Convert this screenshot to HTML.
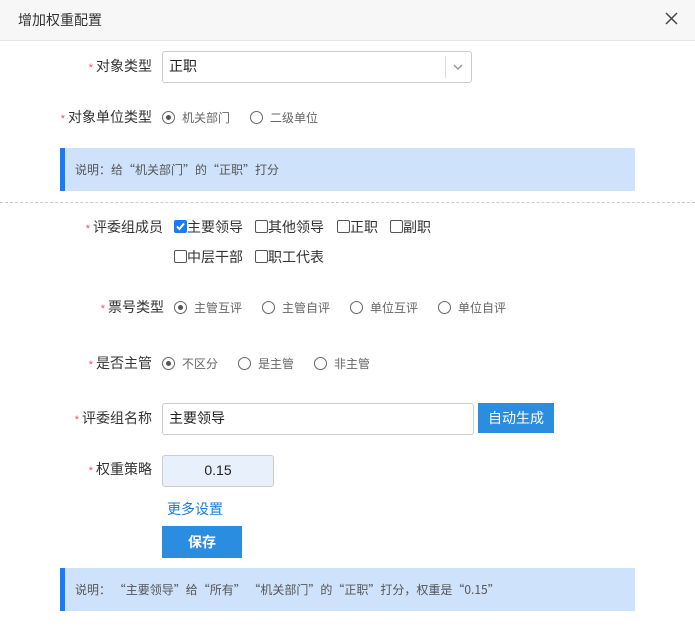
<!DOCTYPE html>
<html><head><meta charset="utf-8"><style>
*{box-sizing:border-box;margin:0;padding:0}
body{width:695px;height:630px;background:#fff;font-family:"Liberation Sans","Noto Sans CJK SC",sans-serif;color:#333;position:relative;overflow:hidden}
.a{position:absolute}
.hd{left:0;top:0;width:695px;height:41px;background:#f7f7f7;border-bottom:1px solid #e8e8e8}
.lbl{font-size:14px;color:#333;text-align:right;width:152px;left:0;line-height:16px}
.lbl b{color:#e55;font-weight:normal;font-size:11px;margin-right:3px}
.r{width:13px;height:13px;border:1.5px solid #666;border-radius:50%}
.r.on::after{content:"";position:absolute;left:2.5px;top:2.5px;width:5px;height:5px;border-radius:50%;background:#555}
.rt{font-size:12px;color:#666;line-height:14px}
.cb{width:13px;height:13px;border:1px solid #555;border-radius:2px}
.ct{font-size:14px;color:#333;line-height:16px}
.info{left:60px;width:575px;height:43px;background:#cfe2fb;border-left:5px solid #1a7cf5;font-size:12px;color:#555;padding-left:10px;line-height:43px;font-family:"Noto Sans CJK SC","Liberation Sans",sans-serif}
.inp{border:1px solid #ccc;border-radius:3px;background:#fff;font-size:14px;color:#222;padding-left:6px;line-height:29px}
</style></head><body>
<div class="a hd"></div>
<div class="a" style="left:18px;top:10px;font-size:14px;color:#333">增加权重配置</div>
<svg class="a" style="left:665px;top:12px" width="13" height="13" viewBox="0 0 13 13"><path d="M1 1L12 12M12 1L1 12" stroke="#444" stroke-width="1.5"/></svg>

<div class="a lbl" style="top:58px"><b>*</b>对象类型</div>
<div class="a inp" style="left:162px;top:51px;width:310px;height:32px">正职</div>
<div class="a" style="left:445px;top:56px;width:1px;height:22px;background:#ddd"></div>
<svg class="a" style="left:453px;top:64px" width="10" height="7" viewBox="0 0 10 7"><path d="M1 1L5 5L9 1" stroke="#999" stroke-width="1.5" fill="none"/></svg>

<div class="a lbl" style="top:109px"><b>*</b>对象单位类型</div>
<div class="a r on" style="left:162px;top:111px"></div><div class="a rt" style="left:182px;top:111px">机关部门</div>
<div class="a r" style="left:250px;top:111px"></div><div class="a rt" style="left:270px;top:111px">二级单位</div>

<div class="a info" style="top:148px">说明：给“机关部门”的“正职”打分</div>
<div class="a" style="left:0;top:202px;width:695px;border-top:1px dashed #ccc"></div>

<div class="a lbl" style="top:219px;width:163px"><b>*</b>评委组成员</div>
<div class="a cb" style="left:174px;top:220px;background:#1a7cf5;border-color:#1a7cf5"></div>
<svg class="a" style="left:175px;top:221px" width="11" height="11" viewBox="0 0 11 11"><path d="M2 5.5L4.5 8L9 2.5" stroke="#fff" stroke-width="2" fill="none"/></svg>
<div class="a ct" style="left:187px;top:219px">主要领导</div>
<div class="a cb" style="left:255px;top:220px"></div><div class="a ct" style="left:268px;top:219px">其他领导</div>
<div class="a cb" style="left:337px;top:220px"></div><div class="a ct" style="left:350px;top:219px">正职</div>
<div class="a cb" style="left:390px;top:220px"></div><div class="a ct" style="left:403px;top:219px">副职</div>
<div class="a cb" style="left:174px;top:250px"></div><div class="a ct" style="left:187px;top:249px">中层干部</div>
<div class="a cb" style="left:255px;top:250px"></div><div class="a ct" style="left:268px;top:249px">职工代表</div>

<div class="a lbl" style="top:299px;width:164px"><b>*</b>票号类型</div>
<div class="a r on" style="left:174px;top:301px"></div><div class="a rt" style="left:194px;top:301px">主管互评</div>
<div class="a r" style="left:262px;top:301px"></div><div class="a rt" style="left:282px;top:301px">主管自评</div>
<div class="a r" style="left:350px;top:301px"></div><div class="a rt" style="left:370px;top:301px">单位互评</div>
<div class="a r" style="left:438px;top:301px"></div><div class="a rt" style="left:458px;top:301px">单位自评</div>

<div class="a lbl" style="top:355px"><b>*</b>是否主管</div>
<div class="a r on" style="left:162px;top:357px"></div><div class="a rt" style="left:182px;top:357px">不区分</div>
<div class="a r" style="left:238px;top:357px"></div><div class="a rt" style="left:258px;top:357px">是主管</div>
<div class="a r" style="left:314px;top:357px"></div><div class="a rt" style="left:334px;top:357px">非主管</div>

<div class="a lbl" style="top:410px"><b>*</b>评委组名称</div>
<div class="a inp" style="left:162px;top:403px;width:312px;height:32px">主要领导</div>
<div class="a" style="left:478px;top:403px;width:76px;height:30px;background:#2a8de0;color:#fff;font-size:14px;text-align:center;line-height:30px">自动生成</div>

<div class="a lbl" style="top:461px"><b>*</b>权重策略</div>
<div class="a inp" style="left:162px;top:455px;width:112px;height:32px;background:#e8f0fc;text-align:center;padding:0">0.15</div>
<div class="a" style="left:167px;top:499px;font-size:14px;color:#1a7cd6">更多设置</div>
<div class="a" style="left:162px;top:526px;width:80px;height:32px;background:#2a8de0;color:#fff;font-size:14px;font-weight:bold;text-align:center;line-height:32px">保存</div>

<div class="a info" style="top:568px">说明： “主要领导”给“所有” “机关部门”的“正职”打分，权重是“0.15”</div>
</body></html>
